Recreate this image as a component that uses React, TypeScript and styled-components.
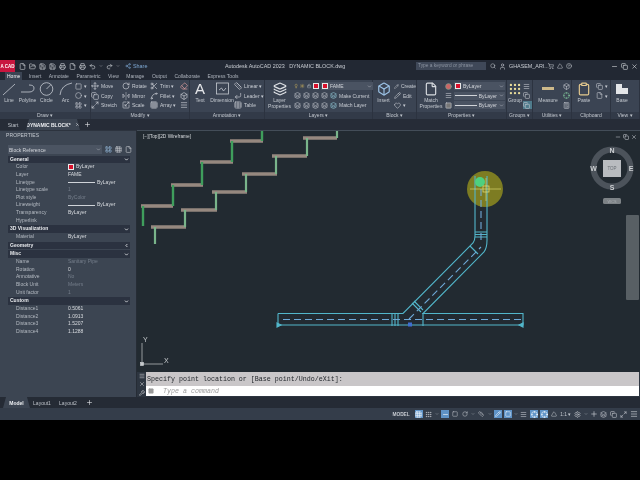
import React from 'react'
import styled, { createGlobalStyle } from 'styled-components'
import {
  Save, FolderOpen, File, Printer, Undo2, Redo2, Share2, Search, User, ShoppingCart, HelpCircle, X, Minus, Copy, Plus,
  Move, RotateCw, Scissors, FlipHorizontal2, Scaling, Spline, Grid3x3, Eraser, Layers, Table, ChevronDown, Ruler, Calculator,
  Clipboard, Settings, Menu, Grip, Crosshair, Wrench, Square, Pencil, Box, Heart, Triangle, Circle as CircleIcon, LayoutGrid,
  Maximize2, CornerDownLeft, Lightbulb, Sun, Lock
} from 'lucide-react'

const GlobalStyle = createGlobalStyle`
  html, body { margin: 0; padding: 0; background: #000; }
  body { font-family: "Liberation Sans", Arial, sans-serif; }
`

const Frame = styled.div`
  width: 640px;
  height: 480px;
  box-sizing: border-box;
  padding: 60px 0;
  background: #000;
  display: flex;
  flex-direction: column;
  overflow: hidden;
  filter: blur(0.35px);
`

// title bar
const TitleBar = styled.div`
  height: 12px;
  flex: none;
  display: flex;
  align-items: center;
  background: #222833;
  color: #c8ccd2;
  font-size: 5.4px;
  white-space: nowrap;
`
const AppButton = styled.div`
  width: 15px;
  height: 100%;
  flex: none;
  background: #c8163f;
  color: #fff;
  font-size: 4.5px;
  font-weight: bold;
  display: flex;
  align-items: center;
  justify-content: center;
`
const QuickIcons = styled.div`
  width: 106px;
  margin-left: 4px;
  display: flex;
  align-items: center;
  gap: 3px;
  color: #d5d9de;
`
const ShareLabel = styled.div`
  width: 100px;
  display: flex;
  align-items: center;
  gap: 2px;
  color: #7fa9d4;
`
const DocTitle = styled.div`
  width: 191px;
`
const SearchBox = styled.div`
  width: 70px;
  height: 8px;
  background: #3f4858;
  color: #8b93a0;
  font-size: 4.8px;
  line-height: 8px;
  padding-left: 2px;
  box-sizing: border-box;
`
const UserArea = styled.div`
  margin-left: 4px;
  display: flex;
  align-items: center;
  gap: 3px;
`
const UserName = styled.span`
  width: 36px;
`
const WindowButtons = styled.div`
  margin-left: auto;
  margin-right: 2px;
  display: flex;
  gap: 3px;
  color: #d9dce0;
`

// ribbon tabs
const MenuTabs = styled.div`
  height: 8px;
  flex: none;
  display: flex;
  align-items: flex-end;
  gap: 7.5px;
  padding-left: 5px;
  background: #222833;
  color: #aeb4bd;
  font-size: 5px;
`
const MenuTab = styled.div<{ $active?: boolean }>`
  height: 8px;
  line-height: 8px;
  padding: 0 ${p => (p.$active ? '2px' : '0')};
  margin-right: ${p => (p.$active ? '-1px' : '0')};
  background: ${p => (p.$active ? '#3b4453' : 'transparent')};
  color: ${p => (p.$active ? '#eef0f3' : '#aeb4bd')};
`

// ribbon
const Ribbon = styled.div`
  height: 39px;
  flex: none;
  display: flex;
  background: #3b4453;
`
const Panel = styled.div<{ $w: number }>`
  width: ${p => p.$w}px;
  flex: none;
  box-sizing: border-box;
  display: flex;
  flex-direction: column;
  border-right: 1px solid #2c3340;
`
const PanelBody = styled.div`
  flex: 1;
  display: flex;
  padding-top: 2px;
  min-height: 0;
`
const PanelTitle = styled.div`
  height: 7px;
  flex: none;
  background: #323a48;
  color: #c2c7ce;
  font-size: 5px;
  line-height: 7px;
  text-align: center;
`
const LargeTool = styled.div<{ $w: number }>`
  width: ${p => p.$w}px;
  flex: none;
  display: flex;
  flex-direction: column;
  align-items: center;
  color: #c4c9d0;
  font-size: 5px;
  line-height: 6px;
  text-align: center;
  white-space: nowrap;
  svg { flex: none; margin-bottom: 0.5px; }
`
const BigLetter = styled.div`
  height: 14.5px;
  font-size: 15px;
  line-height: 14.5px;
  color: #e4e6e9;
`
const ToolColumn = styled.div<{ $w: number }>`
  width: ${p => p.$w}px;
  flex: none;
  display: flex;
  flex-direction: column;
  gap: 1.5px;
`
const SmallTool = styled.div<{ $on?: boolean }>`
  height: 8px;
  display: flex;
  align-items: center;
  gap: 2px;
  color: #c8ccd3;
  font-size: 5px;
  white-space: nowrap;
  background: ${p => (p.$on ? '#4f7b8c' : 'transparent')};
`
const Combo = styled.div<{ $w: number }>`
  width: ${p => p.$w}px;
  height: 8px;
  flex: none;
  box-sizing: border-box;
  background: #4a5362;
  color: #d3d6db;
  font-size: 5px;
  display: flex;
  align-items: center;
  gap: 2px;
  padding: 0 1px;
  svg { margin-left: auto; flex: none; }
`
const Swatch = styled.span`
  width: 6px;
  height: 6px;
  flex: none;
  background: #d8102c;
  border: 1px solid #e8e8e8;
  box-sizing: border-box;
`
const RuleLine = styled.span`
  flex: 1;
  height: 1px;
  background: #d0d3d8;
`
const ToolGap = styled.span`
  width: 3px;
  flex: none;
`

// file tabs
const TabStrip = styled.div<{ $bg: string; $inset?: number }>`
  height: 11px;
  flex: none;
  box-sizing: border-box;
  padding-left: ${p => p.$inset ?? 0}px;
  display: flex;
  align-items: center;
  background: ${p => p.$bg};
  color: #bcc1c8;
  font-size: 5px;
`
const FileTab = styled.div<{ $w: number; $active?: boolean }>`
  width: ${p => p.$w}px;
  height: 100%;
  flex: none;
  display: flex;
  align-items: center;
  justify-content: center;
  gap: 4px;
  font-weight: ${p => (p.$active ? 'bold' : 'normal')};
  background: ${p => (p.$active ? '#3c4552' : 'transparent')};
  color: ${p => (p.$active ? '#eceef1' : '#bcc1c8')};
  clip-path: ${p => (p.$active ? 'polygon(3px 0, calc(100% - 3px) 0, 100% 100%, 0 100%)' : 'none')};
`
const AddTab = styled.div`
  width: 14px;
  display: flex;
  justify-content: center;
  color: #e8eaed;
`

// main area
const Main = styled.div`
  flex: 1;
  min-height: 0;
  display: flex;
`
const Palette = styled.div`
  width: 137px;
  flex: none;
  box-sizing: border-box;
  background: #3c4552;
  border-right: 1px solid #262c35;
  border-top: 1px solid #2c333e;
  color: #b4bac2;
  font-size: 5px;
`
const PaletteTitle = styled.div`
  height: 13.5px;
  line-height: 9px;
  padding-left: 6px;
  font-size: 5px;
  letter-spacing: 0.1px;
  color: #c6cbd1;
`
const SelectorRow = styled.div`
  display: flex;
  align-items: center;
  gap: 3px;
  padding-left: 8px;
  height: 10px;
  color: #c9cdd3;
`
const Selector = styled(Combo)`
  height: 9px;
  padding-left: 1px;
  background: #4b5462;
`
const SectionHeader = styled.div`
  width: 122px;
  height: 7.7px;
  margin: 1px 0 0 8px;
  padding-left: 2px;
  padding-right: 1px;
  box-sizing: border-box;
  background: #2b3240;
  color: #e6e8eb;
  font-weight: bold;
  font-size: 5px;
  line-height: 7.7px;
  display: flex;
  align-items: center;
  justify-content: space-between;
`
const PropRow = styled.div`
  width: 114px;
  height: 7.66px;
  margin-left: 16px;
  display: grid;
  grid-template-columns: 52px 1fr;
  align-items: center;
  line-height: 7.66px;
  white-space: nowrap;
`
const PropValue = styled.div<{ $dim?: boolean }>`
  color: ${p => (p.$dim ? '#747d8a' : '#d9dce0')};
  display: flex;
  align-items: center;
  gap: 2px;
`
const LineSample = styled.span`
  width: 27px;
  height: 1px;
  background: #cfd3d8;
`

const Workspace = styled.div`
  flex: 1;
  min-width: 0;
  display: flex;
  flex-direction: column;
`
const Viewport = styled.div`
  position: relative;
  flex: 1;
  min-height: 0;
  background: #222a31;
  border-top: 1px solid #434d58;
`
const Drawing = styled.svg`
  display: block;
  width: 100%;
  height: 100%;
`
const ViewLabel = styled.div`
  position: absolute;
  left: 6px;
  top: 3px;
  color: #d6d9dc;
  font-size: 4.8px;
`
const ViewportButtons = styled.div`
  position: absolute;
  right: 3px;
  top: 3px;
  display: flex;
  gap: 2px;
  color: #cfd3d8;
`
const ViewCube = styled.svg`
  position: absolute;
  left: 453px;
  top: 15px;
`
const NavBar = styled.div`
  position: absolute;
  left: 489px;
  top: 84px;
  width: 13px;
  height: 85px;
  border-radius: 1px;
  background: #585f64;
`

const CommandLine = styled.div`
  height: 25px;
  flex: none;
  display: flex;
  background: #2d3540;
`
const CommandGutter = styled.div`
  width: 9px;
  flex: none;
  display: flex;
  flex-direction: column;
  align-items: center;
  justify-content: space-around;
  color: #d8dbde;
`
const CommandBody = styled.div`
  flex: 1;
  margin-right: 1px;
  display: flex;
  flex-direction: column;
  font-family: "Liberation Mono", "Courier New", monospace;
  font-size: 6.67px;
`
const CommandHistory = styled.div`
  height: 14px;
  line-height: 15px;
  padding-left: 1px;
  background: #c9c6c8;
  color: #23272c;
`
const CommandInput = styled.div`
  height: 10px;
  background: #fff;
  color: #9a9a9a;
  font-style: italic;
  line-height: 10px;
  display: flex;
  align-items: center;
  gap: 3px;
  padding-left: 2px;
`
const StatusBar = styled.div`
  height: 12px;
  flex: none;
  display: flex;
  align-items: center;
  justify-content: flex-end;
  gap: 2.1px;
  padding-right: 2px;
  background: #343d4a;
  color: #c6cad0;
  font-size: 4.8px;
`
const StatusLabel = styled.span`
  font-weight: bold;
  margin-right: 3px;
`
const StatusIcon = styled.span<{ $on?: boolean }>`
  width: 8px;
  height: 8px;
  display: flex;
  align-items: center;
  justify-content: center;
  color: ${p => (p.$on ? '#fff' : '#c6cad0')};
  background: ${p => (p.$on ? '#5f93c7' : 'transparent')};
`

const draw = { fill: 'none', stroke: '#c7ccd3', strokeWidth: 0.8 }

const PropertyRows = ({ rows }: { rows: { label: string; value: string; dim?: boolean; kind?: string }[] }) => (
  <>
    {rows.map(r => (
      <PropRow key={r.label}>
        <span>{r.label}</span>
        <PropValue $dim={r.dim}>
          {r.kind === 'color' && <Swatch />}
          {r.kind === 'line' && <LineSample />}
          {r.value}
        </PropValue>
      </PropRow>
    ))}
  </>
)

const Section = ({ title, open = true }: { title: string; open?: boolean }) => (
  <SectionHeader>
    {title}
    <ChevronDown size={5} strokeWidth={4} style={{ transform: open ? 'none' : 'rotate(90deg)' }} />
  </SectionHeader>
)

const upperTreads = [[141, 173, 206], [171, 203, 185], [200, 233, 162], [230, 263, 141]]
const upperRisers = [[143, 206, 226], [173, 185, 206], [202, 162, 185], [232, 141, 162], [262, 131, 141]]
const lowerTreads = [[151, 186, 227], [181, 217, 210], [212, 247, 192], [242, 277, 174], [272, 307, 156], [303, 337, 138]]
const lowerRisers = [[155, 227, 244], [185, 210, 227], [216, 192, 210], [246, 174, 192], [276, 156, 174], [307, 138, 156], [337, 131, 138]]

const Stairs = () => (
  <g>
    {[...upperTreads, ...lowerTreads].map(([a, b, y]) => (
      <line key={`${a}-${y}`} x1={a} x2={b} y1={y} y2={y} stroke="#96887f" strokeWidth={3.6} />
    ))}
    {upperRisers.map(([x, a, b]) => (
      <line key={`${x}-${a}`} x1={x} x2={x} y1={a} y2={b} stroke="#3f9e5c" strokeWidth={2.4} />
    ))}
    {lowerRisers.map(([x, a, b]) => (
      <line key={`${x}-${a}`} x1={x} x2={x} y1={a} y2={b} stroke="#79b48a" strokeWidth={2.2} />
    ))}
  </g>
)

const Pipe = () => (
  <g fill="none" stroke="#52b6ca" strokeWidth={1.1}>
    <circle cx={485} cy={189} r={18} fill="#7d7c22" stroke="none" />
    <path d="M278 313.5H403L473 243Q475 240 475 236V176M278 325H523V313.5H423L484 252Q487 248 487 240V176M278 313.5V325" />
    <path d="M392 313V326M395 313V326M398 313V326M423 313V326" />
    <path d="M475 232H487M475 234.5H487M475 237H487M470 246L478 254M412 303L421 312M414 301L423 310" />
    <path d="M283 319.5H523M409 319L481 247M481 240V180" strokeDasharray="7 4" stroke="#6fa9d8" />
    <path d="M277 323L281 325L277 327ZM523 323L519 325L523 327Z" fill="#52b6ca" />
    <rect x={408} y={322.5} width={4} height={4} fill="#3f6fd0" stroke="none" />
    <circle cx={480} cy={182} r={5} fill="#4ed07f" stroke="none" />
    <rect x={483} y={186} width={6} height={6} stroke="#e8e27a" strokeWidth={0.7} />
    <path d="M470 189H501M486 178V201" stroke="#e8e27a" strokeWidth={0.6} />
  </g>
)

const Ucs = () => (
  <g stroke="#c6cacd" strokeWidth={0.7} fill="none">
    <path d="M142 343V364H163" />
    <rect x={140.5} y={362.5} width={3} height={3} fill="#c6cacd" />
    <text x={143} y={342} fill="#c6cacd" stroke="none" fontSize={7}>Y</text>
    <text x={164} y={363} fill="#c6cacd" stroke="none" fontSize={7}>X</text>
  </g>
)

export default function App() {
  return (
    <Frame>
      <GlobalStyle />
      <TitleBar>
        <AppButton>A CAD</AppButton>
        <QuickIcons>
          <File size={7} /><FolderOpen size={7} /><Save size={7} /><Save size={7} /><Printer size={7} /><File size={7} /><Printer size={7} /><Undo2 size={7} /><ChevronDown size={4} /><Redo2 size={7} /><ChevronDown size={4} />
        </QuickIcons>
        <ShareLabel><Share2 size={6} />Share</ShareLabel>
        <DocTitle>Autodesk AutoCAD 2023 &nbsp; DYNAMIC BLOCK.dwg</DocTitle>
        <SearchBox>Type a keyword or phrase</SearchBox>
        <UserArea>
          <Search size={6} /><User size={7} />
          <UserName>GHASEM_ARI...</UserName>
          <ShoppingCart size={6} /><Triangle size={6} /><HelpCircle size={6} />
        </UserArea>
        <WindowButtons><Minus size={7} /><Copy size={7} /><X size={7} /></WindowButtons>
      </TitleBar>

      <MenuTabs>
        <MenuTab $active>Home</MenuTab>
        <MenuTab>Insert</MenuTab>
        <MenuTab>Annotate</MenuTab>
        <MenuTab>Parametric</MenuTab>
        <MenuTab>View</MenuTab>
        <MenuTab>Manage</MenuTab>
        <MenuTab>Output</MenuTab>
        <MenuTab>Collaborate</MenuTab>
        <MenuTab>Express Tools</MenuTab>
      </MenuTabs>

      <Ribbon>
        <Panel $w={91}>
          <PanelBody>
            <LargeTool $w={18}>
              <svg width="16" height="14" {...draw}><path d="M2 13L14 2" /></svg>Line
            </LargeTool>
            <LargeTool $w={19}>
              <svg width="16" height="14" {...draw}><path d="M1 10H9Q14 10 14 6Q14 3 9 3" /></svg>Polyline
            </LargeTool>
            <LargeTool $w={19}>
              <svg width="15" height="14" {...draw}><circle cx="7.5" cy="7" r="6.3" /><path d="M7.5 7L12 2.5" /></svg>Circle
            </LargeTool>
            <LargeTool $w={19}>
              <svg width="16" height="14" {...draw}><path d="M2 13Q3 3 14 1" /></svg>Arc
            </LargeTool>
            <ToolColumn $w={14}>
              <SmallTool><Square size={7} />▾</SmallTool>
              <SmallTool><CircleIcon size={7} />▾</SmallTool>
              <SmallTool><LayoutGrid size={7} />▾</SmallTool>
            </ToolColumn>
          </PanelBody>
          <PanelTitle>Draw ▾</PanelTitle>
        </Panel>

        <Panel $w={99}>
          <PanelBody>
            <ToolColumn $w={31}>
              <SmallTool><Move size={8} />Move</SmallTool>
              <SmallTool><Copy size={8} />Copy</SmallTool>
              <SmallTool><Maximize2 size={8} />Stretch</SmallTool>
            </ToolColumn>
            <ToolColumn $w={28}>
              <SmallTool><RotateCw size={8} />Rotate</SmallTool>
              <SmallTool><FlipHorizontal2 size={8} />Mirror</SmallTool>
              <SmallTool><Scaling size={8} />Scale</SmallTool>
            </ToolColumn>
            <ToolColumn $w={30}>
              <SmallTool><Scissors size={8} />Trim ▾</SmallTool>
              <SmallTool><Spline size={8} />Fillet ▾</SmallTool>
              <SmallTool><Grid3x3 size={8} />Array ▾</SmallTool>
            </ToolColumn>
            <ToolColumn $w={9}>
              <SmallTool><Eraser size={8} color="#e0a0a0" /></SmallTool>
              <SmallTool><Box size={8} /></SmallTool>
              <SmallTool><Menu size={8} /></SmallTool>
            </ToolColumn>
          </PanelBody>
          <PanelTitle>Modify ▾</PanelTitle>
        </Panel>

        <Panel $w={75}>
          <PanelBody>
            <LargeTool $w={20}>
              <BigLetter>A</BigLetter>Text
            </LargeTool>
            <LargeTool $w={24}>
              <svg width="15" height="14" {...draw}><rect x="1.5" y="1" width="12" height="11" /><path d="M4 8L6.5 6L8.5 9L11 6" /></svg>Dimension
            </LargeTool>
            <ToolColumn $w={30}>
              <SmallTool><Ruler size={8} />Linear ▾</SmallTool>
              <SmallTool><CornerDownLeft size={8} />Leader ▾</SmallTool>
              <SmallTool><Table size={8} />Table</SmallTool>
            </ToolColumn>
          </PanelBody>
          <PanelTitle>Annotation ▾</PanelTitle>
        </Panel>

        <Panel $w={108}>
          <PanelBody>
            <LargeTool $w={29}>
              <Layers size={14} color="#dfe2e6" />Layer<br />Properties
            </LargeTool>
            <ToolColumn $w={79}>
              <SmallTool>
                <Lightbulb size={6} color="#e8c860" /><Sun size={6} color="#e8c860" /><Lock size={6} /><Swatch />
                <Combo $w={52}><Swatch />FAME<ChevronDown size={5} /></Combo>
              </SmallTool>
              <SmallTool><Layers size={7} /><Layers size={7} /><Layers size={7} /><Layers size={7} /><Layers size={7} color="#9ad2e0" />Make Current</SmallTool>
              <SmallTool><Layers size={7} /><Layers size={7} /><Layers size={7} /><Layers size={7} /><Layers size={7} color="#9ad2e0" />Match Layer</SmallTool>
            </ToolColumn>
          </PanelBody>
          <PanelTitle>Layers ▾</PanelTitle>
        </Panel>

        <Panel $w={44}>
          <PanelBody>
            <LargeTool $w={21}>
              <Box size={14} color="#9cc3e6" />Insert
            </LargeTool>
            <ToolColumn $w={22}>
              <SmallTool><Pencil size={7} />Create</SmallTool>
              <SmallTool><Pencil size={7} />Edit</SmallTool>
              <SmallTool><Heart size={7} />▾</SmallTool>
            </ToolColumn>
          </PanelBody>
          <PanelTitle>Block ▾</PanelTitle>
        </Panel>

        <Panel $w={90}>
          <PanelBody>
            <LargeTool $w={28}>
              <File size={14} color="#d7dbe0" />Match<br />Properties
            </LargeTool>
            <ToolColumn $w={61}>
              <SmallTool><CircleIcon size={7} fill="#c66" color="#6a9" /><Combo $w={51}><Swatch />ByLayer<ChevronDown size={5} /></Combo></SmallTool>
              <SmallTool><Menu size={7} /><Combo $w={51}><RuleLine />ByLayer<ChevronDown size={5} /></Combo></SmallTool>
              <SmallTool><Square size={7} fill="#777" /><Combo $w={51}><RuleLine />ByLayer<ChevronDown size={5} /></Combo></SmallTool>
            </ToolColumn>
          </PanelBody>
          <PanelTitle>Properties ▾</PanelTitle>
        </Panel>

        <Panel $w={26}>
          <PanelBody>
            <LargeTool $w={16}>
              <Grip size={14} color="#e8dc9a" />Group
            </LargeTool>
            <ToolColumn $w={9}>
              <SmallTool><Menu size={7} /></SmallTool>
              <SmallTool><Copy size={7} /></SmallTool>
              <SmallTool $on><Copy size={7} /></SmallTool>
            </ToolColumn>
          </PanelBody>
          <PanelTitle>Groups ▾</PanelTitle>
        </Panel>

        <Panel $w={39}>
          <PanelBody>
            <LargeTool $w={30}>
              <svg width="14" height="14"><rect x="1" y="5" width="12" height="3" fill="#cdb98a" /></svg>Measure
            </LargeTool>
            <ToolColumn $w={9}>
              <SmallTool><Box size={7} /></SmallTool>
              <SmallTool><Crosshair size={7} color="#7fc29a" /></SmallTool>
              <SmallTool><Calculator size={7} /></SmallTool>
            </ToolColumn>
          </PanelBody>
          <PanelTitle>Utilities ▾</PanelTitle>
        </Panel>

        <Panel $w={39}>
          <PanelBody>
            <LargeTool $w={24}>
              <Clipboard size={14} color="#e4c98e" />Paste
            </LargeTool>
            <ToolColumn $w={13}>
              <SmallTool><Copy size={7} />▾</SmallTool>
              <SmallTool><File size={7} />▾</SmallTool>
            </ToolColumn>
          </PanelBody>
          <PanelTitle>Clipboard</PanelTitle>
        </Panel>

        <Panel $w={29}>
          <PanelBody>
            <LargeTool $w={22}>
              <svg width="14" height="14"><path d="M1 2H7V6H13V12H1Z" fill="#e3e5e8" /></svg>Base
            </LargeTool>
          </PanelBody>
          <PanelTitle>View ▾</PanelTitle>
        </Panel>
      </Ribbon>

      <TabStrip $bg="#262c37">
        <FileTab $w={26}>Start</FileTab>
        <FileTab $w={54} $active>DYNAMIC BLOCK* <X size={5} /></FileTab>
        <AddTab><Plus size={7} /></AddTab>
      </TabStrip>

      <Main>
        <Palette>
          <PaletteTitle>PROPERTIES</PaletteTitle>
          <SelectorRow>
            <Selector $w={94}>Block Reference<ChevronDown size={5} /></Selector>
            <LayoutGrid size={7} color="#9cc3e6" /><Grid3x3 size={7} /><File size={7} />
          </SelectorRow>
          <Section title="General" />
          <PropertyRows rows={[
            { label: 'Color', value: 'ByLayer', kind: 'color' },
            { label: 'Layer', value: 'FAME' },
            { label: 'Linetype', value: 'ByLayer', kind: 'line' },
            { label: 'Linetype scale', value: '1', dim: true },
            { label: 'Plot style', value: 'ByColor', dim: true },
            { label: 'Lineweight', value: 'ByLayer', kind: 'line' },
            { label: 'Transparency', value: 'ByLayer' },
            { label: 'Hyperlink', value: '' },
          ]} />
          <Section title="3D Visualization" />
          <PropertyRows rows={[{ label: 'Material', value: 'ByLayer' }]} />
          <Section title="Geometry" open={false} />
          <Section title="Misc" />
          <PropertyRows rows={[
            { label: 'Name', value: 'Sanitary Pipe', dim: true },
            { label: 'Rotation', value: '0' },
            { label: 'Annotative', value: 'No', dim: true },
            { label: 'Block Unit', value: 'Meters', dim: true },
            { label: 'Unit factor', value: '1', dim: true },
          ]} />
          <Section title="Custom" />
          <PropertyRows rows={[
            { label: 'Distance1', value: '0.5061' },
            { label: 'Distance2', value: '1.0913' },
            { label: 'Distance3', value: '1.5207' },
            { label: 'Distance4', value: '1.1288' },
          ]} />
        </Palette>

        <Workspace>
          <Viewport>
            <Drawing viewBox="137 131 503 241">
              <Stairs />
              <Pipe />
              <Ucs />
            </Drawing>
            <ViewLabel>[−][Top][2D Wireframe]</ViewLabel>
            <ViewportButtons><Minus size={6} /><Copy size={6} /><X size={6} /></ViewportButtons>
            <ViewCube width="50" height="62" viewBox="0 0 50 62">
              <circle cx="22" cy="22" r="18.5" fill="none" stroke="#4c535b" strokeWidth="6" />
              <rect x="13" y="14" width="18" height="17" fill="#b9bcc0" />
              <text x="22" y="24" textAnchor="middle" fontSize="4.5" fill="#6a6f75">TOP</text>
              <g fontSize="7" fontWeight="bold" fill="#cdd0d3" textAnchor="middle" fontFamily="Liberation Sans">
                <text x="22" y="7">N</text>
                <text x="22" y="44">S</text>
                <text x="3.5" y="25">W</text>
                <text x="41" y="25">E</text>
              </g>
              <rect x="13" y="52" width="18" height="6" rx="1.5" fill="#7d8286" />
              <text x="22" y="56.5" textAnchor="middle" fontSize="3.8" fill="#a8acb0">WCS</text>
            </ViewCube>
            <NavBar />
          </Viewport>
          <CommandLine>
            <CommandGutter><Menu size={6} /><X size={6} /><Wrench size={6} /></CommandGutter>
            <CommandBody>
              <CommandHistory>Specify point location or [Base point/Undo/eXit]:</CommandHistory>
              <CommandInput><Square size={6} fill="#999" /><ToolGap />Type a command</CommandInput>
            </CommandBody>
          </CommandLine>
        </Workspace>
      </Main>

      <TabStrip $bg="#252b35" $inset={3}>
        <FileTab $w={27} $active>Model</FileTab>
        <FileTab $w={24}>Layout1</FileTab>
        <FileTab $w={28}>Layout2</FileTab>
        <AddTab><Plus size={7} /></AddTab>
      </TabStrip>

      <StatusBar>
        <StatusLabel>MODEL</StatusLabel>
        <StatusIcon $on><Grid3x3 size={7} /></StatusIcon>
        <StatusIcon><Grip size={7} /></StatusIcon>
        <ChevronDown size={4} />
        <StatusIcon $on><Minus size={7} /></StatusIcon>
        <StatusIcon><Square size={6} /></StatusIcon>
        <StatusIcon><RotateCw size={6} /></StatusIcon>
        <ChevronDown size={4} />
        <StatusIcon><Ruler size={6} /></StatusIcon>
        <ChevronDown size={4} />
        <StatusIcon $on><Pencil size={6} /></StatusIcon>
        <StatusIcon $on><Square size={6} /></StatusIcon>
        <ChevronDown size={4} />
        <StatusIcon><Menu size={7} /></StatusIcon>
        <StatusIcon $on><Crosshair size={7} /></StatusIcon>
        <StatusIcon $on><Crosshair size={7} /></StatusIcon>
        <StatusIcon><Triangle size={6} /></StatusIcon>
        <span>1:1 ▾</span>
        <StatusIcon><Settings size={7} /></StatusIcon>
        <ChevronDown size={4} />
        <StatusIcon><Plus size={8} /></StatusIcon>
        <StatusIcon><Layers size={7} /></StatusIcon>
        <StatusIcon><Copy size={7} /></StatusIcon>
        <StatusIcon><Maximize2 size={7} /></StatusIcon>
        <StatusIcon><Menu size={8} /></StatusIcon>
      </StatusBar>
    </Frame>
  )
}
